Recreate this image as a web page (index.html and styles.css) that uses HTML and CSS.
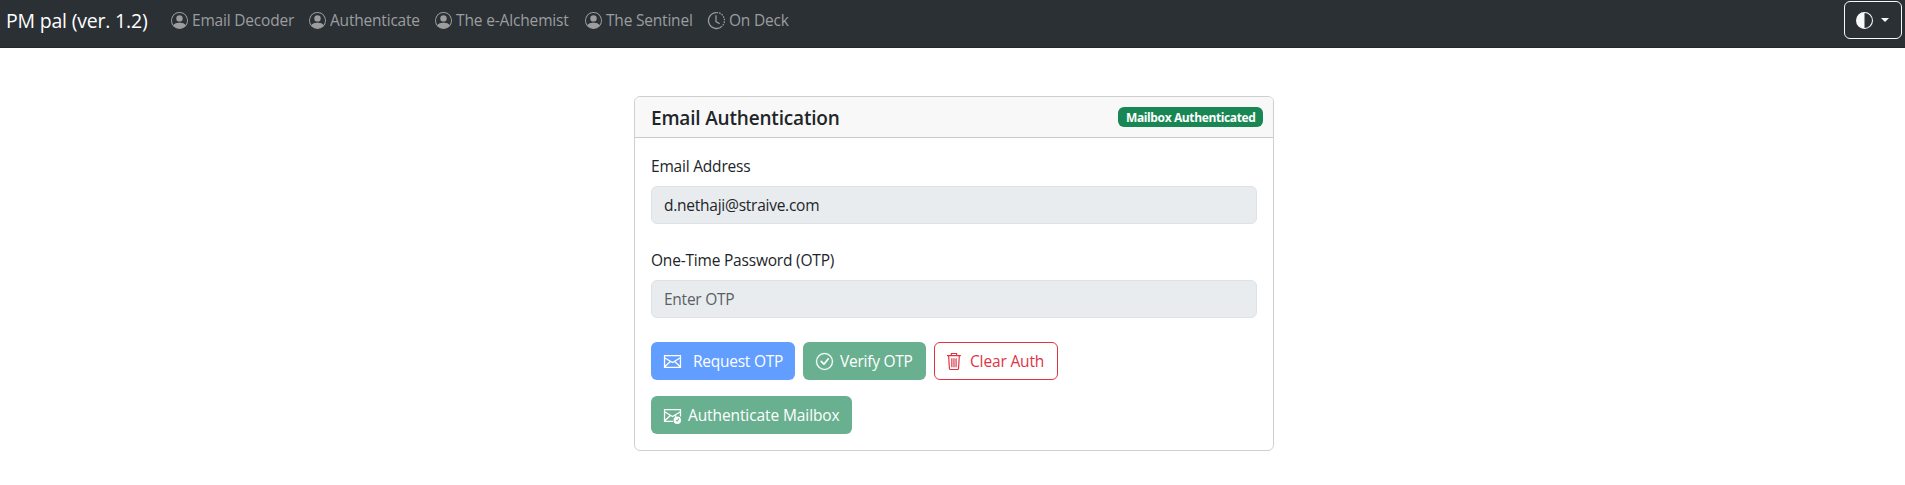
FILE: index.html
```
<!DOCTYPE html>
<html lang="en">
<head>
<meta charset="utf-8">
<title>PM pal</title>
<link rel="stylesheet" href="styles.css">
</head>
<body>
<svg class="defs" aria-hidden="true">
  <symbol id="person" viewBox="0 0 16 16"><path d="M11 6a3 3 0 1 1-6 0 3 3 0 0 1 6 0"/><path fill-rule="evenodd" d="M0 8a8 8 0 1 1 16 0A8 8 0 0 1 0 8m8-7a7 7 0 0 0-5.468 11.370C3.242 11.226 4.805 10 8 10s4.757 1.225 5.468 2.370A7 7 0 0 0 8 1"/><path d="M2.500 12.400C3.300 11 5 10 8 10s4.700 1 5.500 2.400L12 14l-4 1.500L4 14z"/></symbol>
</svg>
<nav class="navbar">
  <a class="brand"><span>PM pal (ver. 1.2)</span></a>
  <a class="nav-link decoder"><svg class="icon"><use href="#person"/></svg><span>Email Decoder</span></a>
  <a class="nav-link authenticate"><svg class="icon"><use href="#person"/></svg><span>Authenticate</span></a>
  <a class="nav-link alchemist"><svg class="icon"><use href="#person"/></svg><span>The e-Alchemist</span></a>
  <a class="nav-link sentinel"><svg class="icon"><use href="#person"/></svg><span>The Sentinel</span></a>
  <a class="nav-link deck"><svg class="icon" viewBox="0 0 16 16"><g fill="none" stroke="currentColor" stroke-width="1.200"><path d="M8 .5a7.500 7.500 0 1 0 5.300 12.800M7.500 3v6l3.500 2"/><path stroke-dasharray="1.500 1" d="M8 .5a7.500 7.500 0 0 1 5.300 12.800"/></g></svg><span>On Deck</span></a>
  <button class="theme"><svg class="icon" viewBox="0 0 16 16"><path d="M8 15A7 7 0 1 0 8 1zm0 1A8 8 0 1 1 8 0a8 8 0 0 1 0 16"/></svg><i class="caret"></i></button>
</nav>
<main class="card">
  <header class="card-header"><h5 class="title"><span>Email Authentication</span></h5><span class="badge">Mailbox Authenticated</span></header>
  <div class="card-body">
    <label class="label">Email Address</label>
    <div class="control">d.nethaji@straive.com</div>
    <label class="label">One-Time Password (OTP)</label>
    <div class="control placeholder">Enter OTP</div>
    <div class="actions">
      <button class="btn blue request"><svg class="icon" viewBox="0 0 16 16"><path fill="none" stroke="currentColor" stroke-width="1.200" d="M.5 2.500h15v11H.5ZM.5 4.500 8 9l7.500-4.500M.7 13 6 8M15.300 13 10 8"/></svg><span>Request OTP</span></button>
      <button class="btn green verify"><svg class="icon" viewBox="0 0 16 16"><path stroke="currentColor" stroke-width=".25" d="M8 15A7 7 0 1 1 8 1a7 7 0 0 1 0 14m0 1A8 8 0 1 0 8 0a8 8 0 0 0 0 16"/><path d="m10.970 4.970-.020.022-3.473 4.425-2.093-2.094a.75.75 0 0 0-1.060 1.060L6.970 11.030a.75.75 0 0 0 1.079-.020l3.992-4.990a.75.75 0 0 0-1.071-1.050"/></svg><span>Verify OTP</span></button>
      <button class="btn red clear"><svg class="icon" viewBox="0 0 16 16"><path fill="none" stroke="currentColor" stroke-width="1.100" d="M1 2.500h13M5 2.500V.5h5v2M2.500 3l.7 11.500q.1 1 1 1h6.600q.9 0 1-1L12.500 3M5.500 5v8.500M7.500 5v8.500M9.500 5v8.500"/></svg><span>Clear Auth</span></button>
    </div>
    <button class="btn green mailbox"><svg class="icon" viewBox="0 0 16 16"><path fill="none" stroke="currentColor" stroke-width="1.200" d="M8.500 13.500h-8v-11h15V9M.5 4.500 8 9l7.500-4.500M.7 13 6 8M11.500 9 10 8"/><path fill-rule="evenodd" d="M16 12.500a3.500 3.500 0 1 1-7 0 3.500 3.500 0 0 1 7 0m-1.600-1.300-.7-.5-1.500 1.900-.8-.7-.6.600 1.500 1.400z"/></svg><span>Authenticate Mailbox</span></button>
  </div>
</main>
</body>
</html>
```
FILE: styles.css
```
* { box-sizing: border-box; }
body {
  margin: 0;
  background: #fff;
  color: #212529;
  font: 400 15.5px/24px "Open Sans", "Noto Sans", sans-serif;
}
.defs { position: absolute; width: 0; height: 0; }
span { white-space: nowrap; }
.icon { width: 17px; height: 17px; flex: none; fill: currentColor; overflow: visible; }

.navbar {
  display: flex;
  align-items: flex-start;
  height: 48px;
  padding: 1px 3px 0 6px;
  background: #2b3035;
  border-bottom: 1px solid #24272e;
}
.brand { width: 165px; padding-top: 5px; color: #fff; font-size: 19.5px; line-height: 30px; letter-spacing: -0.2px; }
.nav-link { display: flex; align-items: center; gap: 4px; padding-top: 7px; color: #9b9d9f; letter-spacing: -0.2px; }
.decoder { width: 138px; }
.authenticate { width: 126px; }
.alchemist { width: 150px; letter-spacing: -0.15px; }
.sentinel { width: 123px; }
.theme {
  display: flex;
  align-items: center;
  gap: 8px;
  width: 58px;
  height: 38px;
  margin-left: auto;
  padding: 0 0 0 11px;
  background: none;
  border: 1px solid #f8f9fa;
  border-radius: 6px;
  color: #f8f9fa;
}
.caret { border: 4px solid transparent; border-top-color: currentColor; border-bottom: 0; }

.card { width: 640px; height: 355px; margin: 48px 0 0 634px; border: 1px solid #cfcfcf; border-radius: 6px; }
.card-header {
  display: flex;
  align-items: center;
  justify-content: space-between;
  height: 41px;
  padding: 0 10px 0 16px;
  background: #f8f8f8;
  border-bottom: 1px solid #cbcbcb;
  border-radius: 5px 5px 0 0;
}
.title { margin: 2px 0 0; font-size: 19px; line-height: 24px; font-weight: 600; letter-spacing: -0.18px; }
.badge {
  width: 145px;
  height: 20px;
  padding-left: 8px;
  border-radius: 6px;
  background: #198754;
  color: #fff;
  font-size: 12px;
  line-height: 21px;
  font-weight: 700;
  letter-spacing: -0.38px;
}
.card-body { padding: 16px; }
.label { display: block; margin-bottom: 8px; letter-spacing: -0.2px; }
.control {
  height: 38px;
  margin-bottom: 24px;
  padding: 6px 12px;
  border: 1px solid #dee2e6;
  border-radius: 6px;
  background: #e9ecef;
  letter-spacing: -0.25px;
}
.placeholder { color: #595f64; }
.actions { display: flex; gap: 8px; margin-bottom: 16px; }
.btn {
  display: flex;
  align-items: center;
  gap: 7px;
  height: 38px;
  padding: 0 0 0 12px;
  border: 1px solid transparent;
  border-radius: 6px;
  color: #fff;
  font: inherit;
  letter-spacing: -0.25px;
}
.blue { background: #619eff; }
.green { background: #69b090; }
.red { background: #fff; border-color: #dc3545; color: #dc3545; }
.request { width: 144px; gap: 12px; }
.verify { width: 123px; }
.clear { width: 124px; letter-spacing: -0.15px; }
.clear .icon { margin-left: -1px; }
.mailbox { width: 201px; letter-spacing: -0.1px; }
```
